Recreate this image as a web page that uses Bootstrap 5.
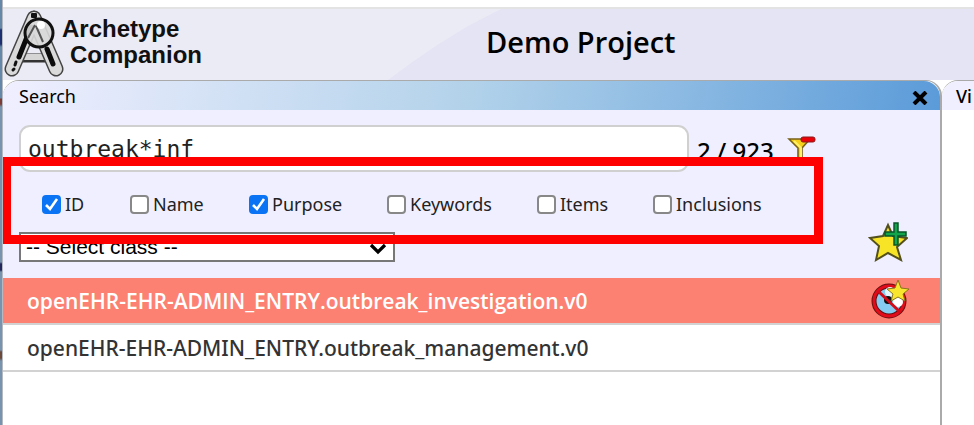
<!DOCTYPE html>
<html lang="en">
<head>
<meta charset="utf-8">
<meta name="viewport" content="width=device-width, initial-scale=1">
<title>Archetype Companion</title>
<link href="https://cdn.jsdelivr.net/npm/bootstrap@5.3.0/dist/css/bootstrap.min.css" rel="stylesheet">
<style>
body { font-family: "Noto Sans", "Open Sans", sans-serif; color: #000; background: #fff; line-height: 1.2; }
.desk-edge { width: 3px; background: linear-gradient(#6688a8 0 28px, #1c2f70 30px 44px, #6688a8 47px 98px, #7c3c38 99px 104px, #7893ad 107px 262px, #22285c 264px 270px, #7893ad 272px 350px, #6b4a3c 352px 358px, #7893ad 361px); border-right: 1px solid #b4b8c0; }
.workspace { padding-top: 7px; }
.app-header { height: 73px; border-top: 2px solid #e3e3e3; background: #ebebf5; }
.app-header::before { content: ""; position: absolute; inset: 0; background: #e4e4f4; clip-path: polygon(385px 100%, 408px 76%, 435px 50%, 465px 24%, 498px 0, 100% 0, 100% 100%); }
.brand { font: bold 24px/26px "Liberation Sans", Arial, sans-serif; color: #111; text-decoration: none; }
.brand-text { margin: 7px 0 0 -3px; }
.brand-second { padding-left: 8px; }
.brand svg { width: 62px; height: 70px; }
.project-title { left: 483px; top: 14px; font: 600 29px/38px "Open Sans", "Noto Sans", sans-serif; }
.panel { border: 1px solid #aaa; border-width: 1px 2px 0 0; border-radius: 16px 16px 0 0; background: #fff; }
.panel-title { height: 29px; padding: 0 12px 0 16px; font: 18px/30px "Noto Sans", sans-serif; }
.panel-heading { font-size: 18px; }
.search-title { background: linear-gradient(100deg, #f0efff, #b2d2ea 50%, #5b9bd9); border-radius: 16px 16px 0 0; }
.visual-panel { flex: 0 0 32px; border-width: 1px 0 0; border-radius: 16px 0 0 0; }
.visual-title { background: #f0efff; font-weight: 500; padding: 0 0 0 14px; border-radius: 16px 0 0 0; }
.close-btn { padding: 4px 0 0; width: 16px; line-height: 0; }
.search-form { background: #f0efff; height: 168px; padding: 15px 16px 0; }
.query { flex: 0 0 670px; height: 47px; border: 2px solid #d0d0d0; border-radius: 11px; padding: 0 7px; font: 23px/28px "DejaVu Sans Mono", monospace; color: #222; background: #fff; }
.count { font-weight: 500; font-size: 24px; line-height: 25px; }
.fields { padding: 22px 0 0 23px; display: grid; grid-template-columns: 88px 119px 138px 150px 116px auto; font-size: 18px; color: #222; }
.fields input { appearance: none; width: 19px; height: 19px; margin: 0; border: 2px solid #888; border-radius: 4px; background: #fff; }
.fields input:checked { border-color: #0a74f5; background: #0a74f5 url("data:image/svg+xml,%3Csvg xmlns='http://www.w3.org/2000/svg' viewBox='0 0 15 15'%3E%3Cpath d='M2 8l4 4 7-10' fill='none' stroke='white' stroke-width='2.6'/%3E%3C/svg%3E") center/15px no-repeat; }
.class-select { appearance: none; width: 376px; height: 30px; border: 2px solid #777; border-radius: 0; padding: 0 5px; color: #000; font: 21px/26px "Liberation Sans", Arial, sans-serif; background: #fff url("data:image/svg+xml,%3Csvg xmlns='http://www.w3.org/2000/svg' viewBox='0 0 18 12'%3E%3Cpath d='M2 2l7 7 7-7' fill='none' stroke='black' stroke-width='3.2'/%3E%3C/svg%3E") right 6px bottom 5px/18px 12px no-repeat; }
.icon-btn { line-height: 0; width: 40px; }
.icon-btn svg { width: 40px; height: 42px; }
.result { height: 47px; padding: 0 30px 0 24px; border-bottom: 2px solid #d2d2d2; font: 500 21px/46px "Noto Sans", sans-serif; }
.result a { color: #333; text-decoration: none; }
.result-active { background: #fc8172; }
.result-active a { color: #fff; font-family: "Open Sans", sans-serif; font-weight: 600; }
.callout { left: -1px; top: 76px; width: 821px; height: 87px; border: 9px solid #f00; pointer-events: none; }
</style>
<script src="https://cdn.jsdelivr.net/npm/bootstrap@5.3.0/dist/js/bootstrap.bundle.min.js"></script>
</head>
<body>
<div class="d-flex vh-100 overflow-hidden">
  <div class="desk-edge flex-shrink-0"></div>
  <div class="workspace d-flex flex-column flex-grow-1 overflow-hidden">
    <header class="app-header position-relative flex-shrink-0">
      <a href="#" class="brand d-inline-flex position-relative">
        <svg viewBox="0 0 62 70" aria-hidden="true">
          <g stroke-linecap="round" fill="none">
            <path d="M15 49H47" stroke="#333" stroke-width="9"/>
            <path d="M15 48H47" stroke="#d5d5d5" stroke-width="6"/>
            <path d="M31 9L9 60M31 9L53 60" stroke="#444" stroke-width="15"/>
            <path d="M31 9L9 60M31 9L53 60" stroke="#dadada" stroke-width="12"/>
            <path d="M28 18L16 48M44 40L50 55" stroke="#0b0b0b" stroke-width="5"/>
            <path d="M13 53l-1 3M11 60l-1 1" stroke="#111" stroke-width="3"/>
          </g>
          <rect x="28" y="4" width="6" height="5" rx="1" fill="#111"/>
          <circle cx="36" cy="24" r="14" fill="#d9d9d9" fill-opacity=".9" stroke="#111" stroke-width="3"/>
          <path d="M25 29l7-13M33 17l7 16" stroke="#555" stroke-width="2"/>
          <circle cx="38" cy="16" r="4" fill="#fff"/>
        </svg>
        <span class="brand-text">Archetype<br><span class="brand-second">Companion</span></span>
      </a>
      <h1 class="project-title position-absolute m-0 text-nowrap">Demo Project</h1>
    </header>
    <main class="d-flex flex-grow-1 overflow-hidden">
      <section class="panel position-relative flex-grow-1">
        <div class="panel-title search-title d-flex justify-content-between align-items-center">
          <h2 class="m-0 fs-6 lh-1"><span class="panel-heading fw-normal">Search</span></h2>
          <button type="button" class="close-btn btn border-0" aria-label="Close">
            <svg width="16" height="14" viewBox="0 0 16 14"><path d="M2 1L14 13M14 1L2 13" stroke="#000" stroke-width="4"/></svg>
          </button>
        </div>
        <form class="search-form">
          <div class="d-flex align-items-center">
            <input class="query" type="text" value="outbreak*inf" aria-label="Search archetypes">
            <span class="count ms-2 pt-1">2 / 923</span>
            <button type="button" class="btn border-0 p-0 ms-2 ps-1 lh-1" aria-label="Clear filter">
              <svg width="32" height="32" viewBox="0 0 32 32"><path d="M3 6H24L16 15V30H12V15Z" fill="#f5cf18" stroke="#776018" stroke-width="1.6"/><path d="M8 8L15 15V28" stroke="#fff06a" stroke-width="2" fill="none"/><rect x="15" y="4" width="14" height="5" rx="2" fill="#e90008" stroke="#8d1b1b"/></svg>
            </button>
          </div>
          <div class="fields">
            <label class="d-flex align-items-center gap-1"><input type="checkbox" checked><span>ID</span></label>
            <label class="d-flex align-items-center gap-1"><input type="checkbox"><span>Name</span></label>
            <label class="d-flex align-items-center gap-1"><input type="checkbox" checked><span>Purpose</span></label>
            <label class="d-flex align-items-center gap-1"><input type="checkbox"><span>Keywords</span></label>
            <label class="d-flex align-items-center gap-1"><input type="checkbox"><span>Items</span></label>
            <label class="d-flex align-items-center gap-1"><input type="checkbox"><span>Inclusions</span></label>
          </div>
          <div class="d-flex justify-content-between align-items-end pe-3">
            <select class="class-select mt-3" aria-label="Class"><option>-- Select class --</option></select>
            <button type="button" class="icon-btn btn border-0 p-0" aria-label="Add favourite">
              <svg viewBox="0 0 40 42"><path d="M20 5L25 16L39 18L29 27L33 40L20 33L8 40L11 26L2 18L15 16Z" fill="#f8e427" stroke="#54501c" stroke-width="2"/><path d="M26 3h4v9h8v4h-8v9h-4v-9h-9v-4h9z" fill="#13a54c" stroke="#085529" stroke-width="1.5"/></svg>
            </button>
          </div>
        </form>
        <div class="result result-active d-flex justify-content-between">
          <a href="#">openEHR-EHR-ADMIN_ENTRY.outbreak_investigation.v0</a>
          <button type="button" class="icon-btn btn border-0 p-0" aria-label="Hide favourite">
            <svg viewBox="0 0 40 42"><circle cx="19" cy="21" r="15" fill="#86cbf0" stroke="#611" stroke-width="5"/><circle cx="19" cy="21" r="15" fill="none" stroke="#e20b19" stroke-width="3"/><circle cx="20" cy="12" r="5" fill="#e6f6ff"/><circle cx="28" cy="22" r="5" fill="#fff"/><circle cx="18" cy="20" r="4" fill="#111"/><path d="M8 11L30 32" stroke="#d20b19" stroke-width="3"/><path d="M28 0L31 8L39 9L33 14L35 21L28 17L21 21L23 14L17 9L25 8Z" fill="#f8e62e" stroke="#8b741f"/></svg>
          </button>
        </div>
        <div class="result"><a href="#">openEHR-EHR-ADMIN_ENTRY.outbreak_management.v0</a></div>
        <div class="callout position-absolute"></div>
      </section>
      <section class="panel visual-panel overflow-hidden">
        <h2 class="panel-title visual-title m-0">Vi</h2>
      </section>
    </main>
  </div>
</div>
</body>
</html>
